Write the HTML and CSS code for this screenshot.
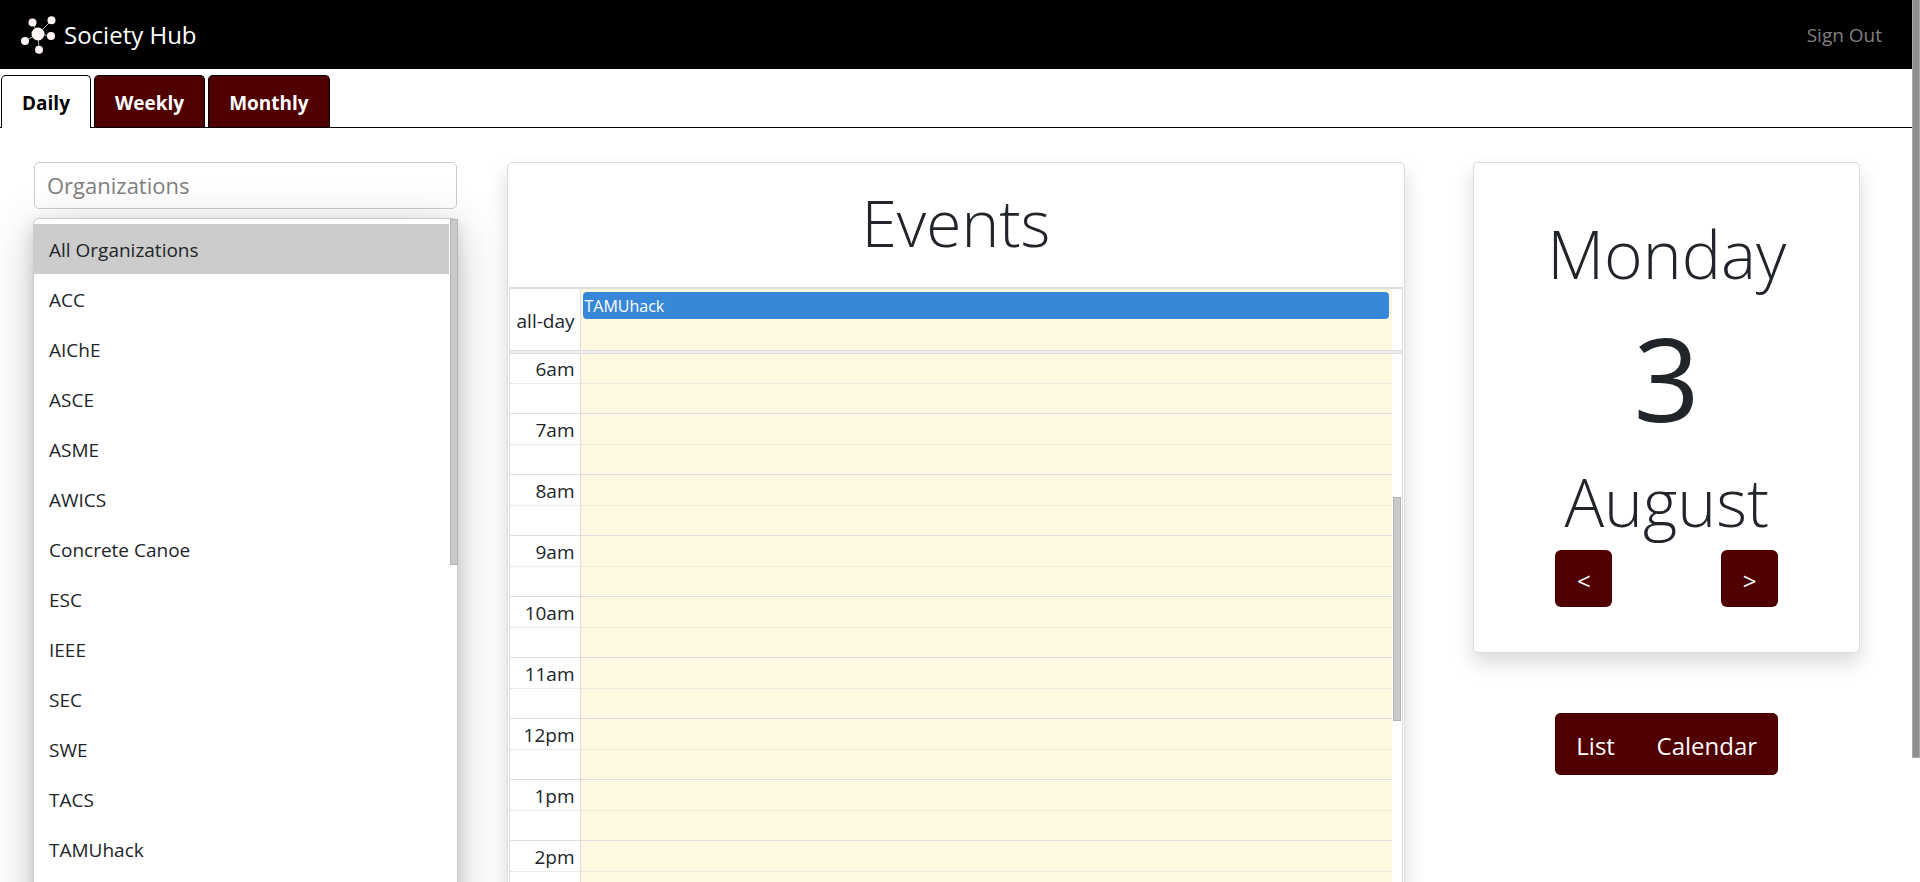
FILE: index.html
```html
<!DOCTYPE html>
<html lang="en">
<head>
<meta charset="utf-8">
<title>Society Hub</title>
<link rel="stylesheet" href="styles.css">
</head>
<body>
<div class="app">
  <header class="navbar">
    <a class="brand" href="#">
      <svg class="logo" viewBox="0 0 36 40" aria-hidden="true">
        <g stroke="#aaa" stroke-width="1"><path d="M17 19 11 7M17 19 31 5M17 19 30 21M17 19 4 26M17 19 18 35"/></g>
        <g fill="#fff5f5"><circle cx="17" cy="19" r="6.500"/><circle cx="11.500" cy="7.500" r="4"/><circle cx="30.500" cy="5.300" r="4"/><circle cx="30" cy="21" r="4"/><circle cx="4" cy="26" r="4"/><circle cx="18" cy="34.700" r="4"/></g>
      </svg>
      <span>Society Hub</span>
    </a>
    <a class="signout" href="#">Sign Out</a>
  </header>
  <nav class="tabs">
    <a class="tab active" href="#">Daily</a>
    <a class="tab" href="#">Weekly</a>
    <a class="tab" href="#">Monthly</a>
  </nav>
  <main class="columns">
    <section class="filter">
      <input class="search" type="text" placeholder="Organizations" aria-label="Organizations">
      <div class="menu">
        <a class="item selected" href="#">All Organizations</a>
        <a class="item" href="#">ACC</a>
        <a class="item" href="#">AIChE</a>
        <a class="item" href="#">ASCE</a>
        <a class="item" href="#">ASME</a>
        <a class="item" href="#">AWICS</a>
        <a class="item" href="#">Concrete Canoe</a>
        <a class="item" href="#">ESC</a>
        <a class="item" href="#">IEEE</a>
        <a class="item" href="#">SEC</a>
        <a class="item" href="#">SWE</a>
        <a class="item" href="#">TACS</a>
        <a class="item" href="#">TAMUhack</a>
        <span class="thumb menu-thumb"></span>
      </div>
    </section>
    <section class="card events">
      <h1 class="display title">Events</h1>
      <div class="calendar">
        <div class="allday">
          <div class="axis">all-day</div>
          <div class="allday-body"><a class="event" href="#">TAMUhack</a></div>
        </div>
        <div class="divider"></div>
        <div class="scroller">
          <table class="slots">
            <tr class="first"><th>6am</th><td></td></tr><tr class="half"><th></th><td></td></tr>
            <tr><th>7am</th><td></td></tr><tr class="half"><th></th><td></td></tr>
            <tr><th>8am</th><td></td></tr><tr class="half"><th></th><td></td></tr>
            <tr><th>9am</th><td></td></tr><tr class="half"><th></th><td></td></tr>
            <tr><th>10am</th><td></td></tr><tr class="half"><th></th><td></td></tr>
            <tr><th>11am</th><td></td></tr><tr class="half"><th></th><td></td></tr>
            <tr><th>12pm</th><td></td></tr><tr class="half"><th></th><td></td></tr>
            <tr><th>1pm</th><td></td></tr><tr class="half"><th></th><td></td></tr>
            <tr><th>2pm</th><td></td></tr><tr class="half"><th></th><td></td></tr>
          </table>
          <span class="thumb slots-thumb"></span>
        </div>
      </div>
    </section>
    <aside class="side">
      <div class="card date">
        <div class="display">Monday</div>
        <div class="day">3</div>
        <div class="display">August</div>
        <div class="pager">
          <button class="btn square" type="button">&lt;</button>
          <button class="btn square" type="button">&gt;</button>
        </div>
      </div>
      <div class="group">
        <button class="btn" type="button">List</button>
        <button class="btn" type="button">Calendar</button>
      </div>
    </aside>
  </main>
  <span class="page-thumb"></span>
</div>
</body>
</html>
```
FILE: styles.css
```css
* { box-sizing: border-box; }
body {
  margin: 0;
  background: #fff;
  color: #212529;
  font-family: "Open Sans", "Noto Sans", sans-serif;
  font-size: 19px;
  line-height: 30px;
}
a { color: inherit; text-decoration: none; }
.app {
  position: relative;
  height: 100vh;
  overflow: hidden;
  padding-right: 8px;
}
.navbar {
  display: flex;
  align-items: center;
  justify-content: space-between;
  height: 69px;
  padding: 0 30px 0 21px;
  background: #000;
}
.brand {
  display: flex;
  align-items: center;
  gap: 7px;
  color: #fff;
  font-size: 24px;
}
.logo { width: 36px; height: 40px; }
.signout { color: #808080; }
.tabs {
  display: flex;
  gap: 3px;
  padding: 6px 1px 0;
  border-bottom: 1px solid #000;
}
.tab {
  padding: 12px 20px 9px;
  border: 1px solid #000;
  border-bottom: 0;
  border-radius: 5px 5px 0 0;
  background: #500000;
  color: #fff;
  font-weight: 700;
}
.tab.active {
  margin-bottom: -1px;
  background: #fff;
  color: #000;
}
.columns {
  display: flex;
  align-items: flex-start;
  padding: 34px 52px 0 34px;
}
.filter { flex: 423 1 0; min-width: 0; margin-right: 50px; }
.search {
  display: block;
  width: 100%;
  height: 47px;
  padding: 0 12px 2px;
  border: 1px solid #ccc;
  border-radius: 5px;
  font: inherit;
  font-size: 22px;
  background: transparent;
}
.search::placeholder { color: #808080; }
.menu {
  position: relative;
  margin: 9px -1px 0;
  padding: 5px 0 60px;
  border: 1px solid #ccc;
  border-radius: 6px;
  background: #fff;
  box-shadow: 0 10px 50px rgba(0, 0, 0, .2), 0 6px 16px rgba(0, 0, 0, .14);
}
.item { display: block; height: 50px; padding: 11px 15px 9px; }
.item.selected { margin-right: 8px; background: #ccc; }
.thumb {
  position: absolute;
  width: 8px;
  border: 1px solid #b4b4b4;
  background: #cacaca;
}
.menu-thumb { top: 0; right: -1px; height: 346px; }
.card {
  border: 1px solid #dcdcdc;
  border-radius: 5px;
  background: #fff;
  box-shadow: 0 10px 20px rgba(0, 0, 0, .15);
}
.events { flex: 898 1 0; min-width: 0; margin-right: 68px; }
.display {
  margin: 0;
  font-size: 66px;
  font-weight: 300;
  line-height: 84px;
  text-align: center;
}
.title { padding: 18px 0 22px; font-size: 64px; }
.calendar {
  margin: 0 1px;
  border: 1px solid #ddd;
  border-top-width: 2px;
}
.allday { display: flex; padding-right: 10px; }
.axis {
  width: 70px;
  padding: 4px 5px 0 0;
  line-height: 57px;
  text-align: right;
}
.allday-body {
  flex: 1;
  padding: 3px 3px 0 2px;
  border-left: 1px solid #ddd;
  background: #fff8e1;
}
.event {
  display: block;
  padding: 1px 2px 0;
  border-radius: 4px;
  background: #3788d8;
  color: #fff;
  font-size: 16px;
  line-height: 26px;
}
.divider { height: 4px; border: 1px solid #ddd; border-width: 1px 0; background: #eee; }
.scroller { position: relative; padding-right: 10px; }
.slots { width: 100%; border-collapse: separate; border-spacing: 0; }
.slots th {
  width: 70px;
  height: 31px;
  padding: 2px 5px 0 0;
  border-top: 1px solid #ddd;
  font-weight: 400;
  line-height: 28px;
  text-align: right;
}
.slots td {
  padding: 0;
  border-top: 1px solid #ddd;
  border-left: 1px solid #ddd;
  background: #fff8e1;
}
.slots .half th { height: 30px; }
.slots .half th, .slots .half td { border-top-style: dotted; }
.slots .first th { height: 29px; line-height: 27px; }
.slots .first th, .slots .first td { border-top: 0; }
.slots-thumb { top: 143px; right: 1px; height: 224px; }
.side { flex: 387 1 0; min-width: 0; }
.date { padding: 48px 0 45px; }
.day {
  font-size: 116px;
  line-height: 164px;
  text-align: center;
}
.pager {
  display: flex;
  justify-content: space-between;
  margin-top: 7px;
  padding: 0 81px;
}
.btn {
  padding: 18px 20px 14px;
  border: 0;
  border-radius: 6px;
  background: #500000;
  color: #fff;
  font: inherit;
  font-size: 24px;
  line-height: 30px;
}
.square { width: 57px; height: 57px; padding: 4px 0 0; }
.group {
  display: flex;
  margin: 60px 82px 0;
  border-radius: 6px;
  background: #500000;
}
.group .btn { flex: auto; }
.page-thumb {
  position: absolute;
  top: 0;
  right: 0;
  width: 8px;
  height: 758px;
  border: 1px solid #a8a8a8;
  border-top: 0;
  background: #8f8f8f;
}
```
